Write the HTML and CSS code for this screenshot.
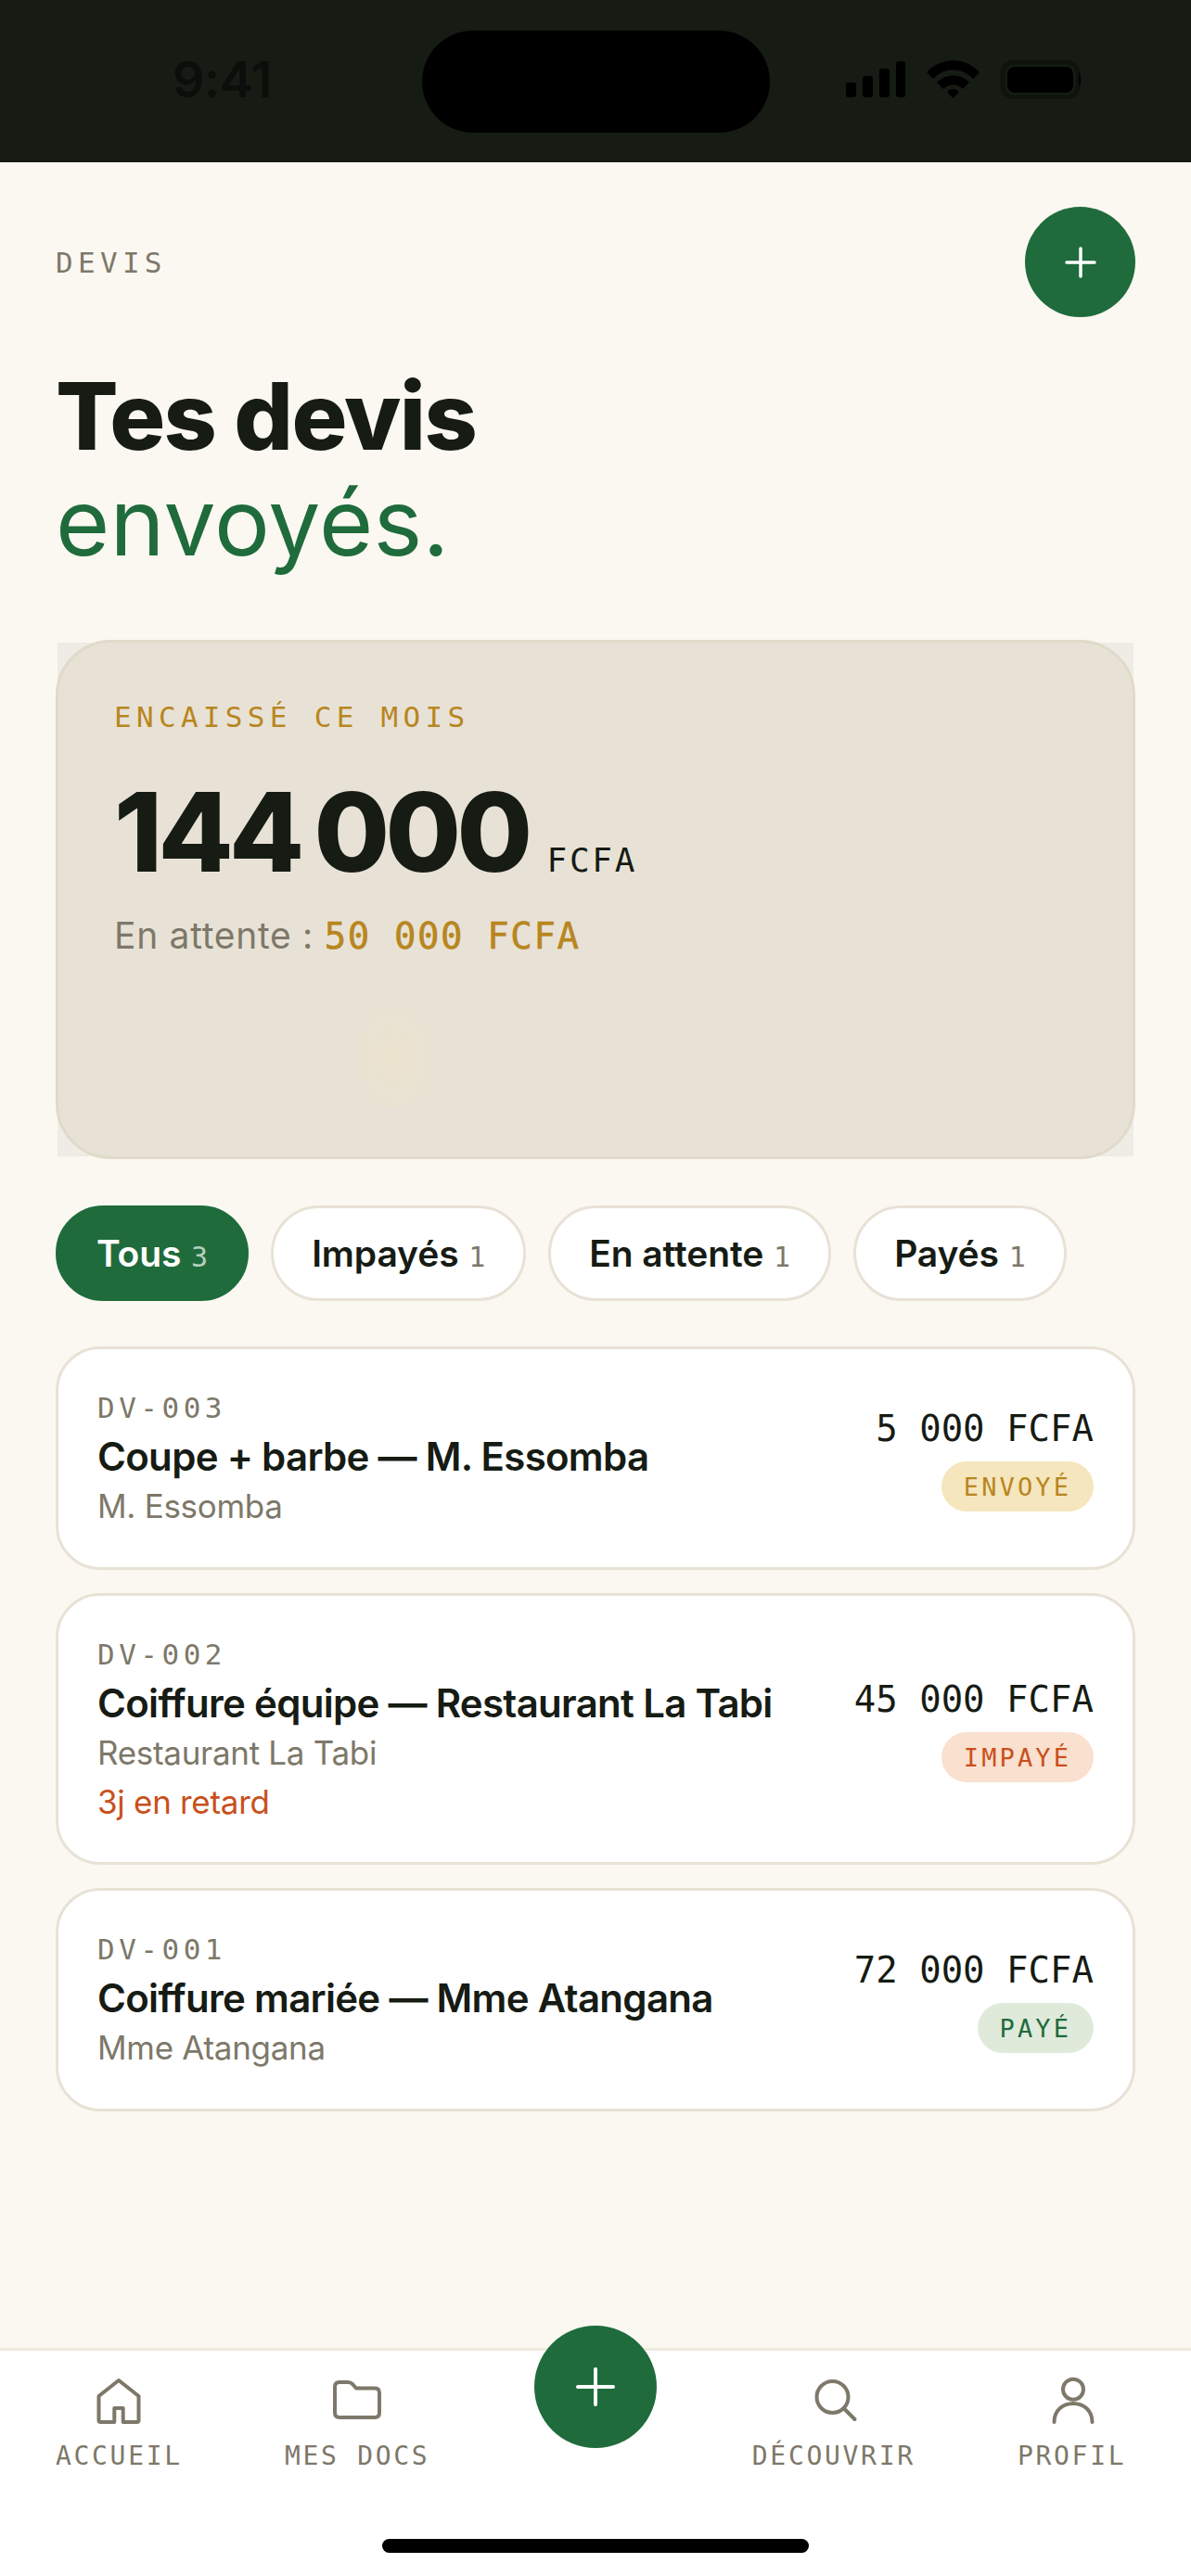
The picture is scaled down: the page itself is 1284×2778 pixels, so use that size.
FILE: index.html
```html
<!DOCTYPE html>
<html lang="fr">
<head>
    <meta charset="UTF-8">
    <meta name="viewport" content="width=device-width, initial-scale=1.0">
    <title>Devis</title>
    <link rel="stylesheet" href="styles.css">
</head>
<body>
    <div class="status-bar">
        <span class="status-time">9:41</span>
        <div class="island"></div>
        <svg class="status-icons" width="253" height="42" viewBox="0 0 253 42">
            <rect x="0" y="24" width="11" height="16" rx="3"/>
            <rect x="18" y="17" width="11" height="23" rx="3"/>
            <rect x="36" y="9" width="11" height="31" rx="3"/>
            <rect x="54" y="1" width="10" height="39" rx="3"/>
            <path d="M87 13 C102 -4 129 -4 144 13 L137 20 C125 7 106 7 94 20 Z"/>
            <path d="M98 24 C107 14 124 14 133 24 L126 31 C120 25 111 25 105 31 Z"/>
            <path d="M109 34 C113 30 118 30 122 34 L115.500 41 Z"/>
            <rect x="170" y="2" width="81" height="38" rx="12" fill="none" stroke="#0f130e" stroke-width="5" transform="translate(-1 0)"/>
            <rect x="174" y="7" width="71" height="28" rx="8"/>
            <path d="M251 13 C254 15 254 27 251 27 Z"/>
        </svg>
    </div>

    <main class="content">
        <header class="top-row">
            <span class="eyebrow">DEVIS</span>
            <button class="add-btn">
                <svg width="36" height="36" viewBox="0 0 36 36"><path d="M18 3V33M3 18H33" stroke="#fff" stroke-width="3.500" stroke-linecap="round"/></svg>
            </button>
        </header>

        <h1 class="page-title">Tes devis<br><em>envoyés.</em></h1>

        <section class="summary-back">
            <div class="summary">
                <div class="summary-label">ENCAISSÉ CE MOIS</div>
                <div class="summary-amount">144 000<span>FCFA</span></div>
                <div class="summary-pending">En attente : <b>50 000 FCFA</b></div>
                <div class="summary-glow"></div>
            </div>
        </section>

        <div class="chips">
            <div class="chip active">Tous <span>3</span></div>
            <div class="chip">Impayés <span>1</span></div>
            <div class="chip">En attente <span>1</span></div>
            <div class="chip">Payés <span>1</span></div>
        </div>

        <div class="quote-list">
            <div class="quote">
                <div class="quote-info">
                    <div class="quote-ref">DV-003</div>
                    <div class="quote-name">Coupe + barbe — M. Essomba</div>
                    <div class="quote-client">M. Essomba</div>
                </div>
                <div class="quote-side">
                    <div class="quote-price">5 000 FCFA</div>
                    <span class="badge sent">ENVOYÉ</span>
                </div>
            </div>
            <div class="quote">
                <div class="quote-info">
                    <div class="quote-ref">DV-002</div>
                    <div class="quote-name">Coiffure équipe — Restaurant La Tabi</div>
                    <div class="quote-client">Restaurant La Tabi</div>
                    <div class="quote-late">3j en retard</div>
                </div>
                <div class="quote-side">
                    <div class="quote-price">45 000 FCFA</div>
                    <span class="badge unpaid">IMPAYÉ</span>
                </div>
            </div>
            <div class="quote">
                <div class="quote-info">
                    <div class="quote-ref">DV-001</div>
                    <div class="quote-name">Coiffure mariée — Mme Atangana</div>
                    <div class="quote-client">Mme Atangana</div>
                </div>
                <div class="quote-side">
                    <div class="quote-price">72 000 FCFA</div>
                    <span class="badge paid">PAYÉ</span>
                </div>
            </div>
        </div>
    </main>

    <nav class="tab-bar">
        <div class="tab">
            <svg viewBox="0 0 54 54"><path d="M27 5 L48.500 22 V48 Q48.500 50 46.500 50 H31.700 V35 H22.300 V50 H7.500 Q5.500 50 5.500 48 V22 Z"/></svg>
            <span>ACCUEIL</span>
        </div>
        <div class="tab">
            <svg viewBox="0 0 54 54"><path d="M3 12 Q3 7 8 7 H17 Q20 7 22 9 L26 13.500 H46 Q51 13.500 51 18.500 V40 Q51 45 46 45 H8 Q3 45 3 40 Z"/></svg>
            <span>MES DOCS</span>
        </div>
        <div class="tab tab-center">
            <button class="tab-add">
                <svg width="42" height="42" viewBox="0 0 42 42"><path d="M21 2V40M2 21H40" stroke="#fff" stroke-width="4" stroke-linecap="round"/></svg>
            </button>
        </div>
        <div class="tab">
            <svg viewBox="0 0 54 54"><circle cx="25.500" cy="23" r="17"/><path d="M38 35.500 L49.500 47"/></svg>
            <span>DÉCOUVRIR</span>
        </div>
        <div class="tab">
            <svg viewBox="0 0 54 54"><circle cx="28" cy="14.700" r="11"/><path d="M7.500 50 C7.500 38 16 30 28 30 C40 30 48.500 38 48.500 50"/></svg>
            <span>PROFIL</span>
        </div>
        <div class="home-bar"></div>
    </nav>
</body>
</html>
```

FILE: styles.css
```css
:root {
    --ink: #161b14;
    --green: #1f6b3c;
    --gold: #b8861f;
    --muted: #7d7869;
    --line: #e8e2d6;
    --paper: #fbf8f1;
    --mono: "DejaVu Sans Mono", monospace;
    --sans: Inter, "Liberation Sans", sans-serif;
}

* {
    box-sizing: border-box;
}

body {
    margin: 0;
    width: 1284px;
    height: 2778px;
    display: flex;
    flex-direction: column;
    overflow: hidden;
    background-color: var(--paper);
    color: var(--ink);
    font-family: var(--sans);
}

button {
    border: none;
    padding: 0;
    display: flex;
    align-items: center;
    justify-content: center;
    background-color: var(--green);
    border-radius: 50%;
}

/* status bar */
.status-bar {
    height: 175px;
    flex-shrink: 0;
    display: flex;
    align-items: center;
    padding: 0 0 0 186px;
    background-color: var(--ink);
}
.status-time {
    width: 104px;
    margin-bottom: 4px;
    font-size: 54px;
    font-weight: 600;
    letter-spacing: -0.500px;
    color: #0b0e0a;
}
.island {
    width: 375px;
    height: 110px;
    margin-left: 165px;
    margin-right: 82px;
    border-radius: 55px;
    background-color: #000;
}
.status-icons {
    margin-bottom: 3px;
    fill: #000;
}

/* header */
.content {
    flex: 1;
    padding: 48px 60px 0;
}
.top-row {
    display: flex;
    align-items: center;
    justify-content: space-between;
}
.eyebrow {
    font-family: var(--mono);
    font-size: 31px;
    letter-spacing: 5.300px;
    color: var(--muted);
}
.add-btn {
    width: 119px;
    height: 119px;
}
.page-title {
    margin: 50px 0 73px;
    font-size: 100px;
    line-height: 114px;
    font-weight: 800;
    letter-spacing: -1.700px;
}
.page-title em {
    font-style: normal;
    font-weight: 400;
    letter-spacing: 0.300px;
    color: var(--green);
}

/* summary card */
.summary-back {
    margin: 0 2px;
    height: 554px;
    display: flex;
    background-color: #efece6;
}
.summary {
    position: relative;
    flex: 1;
    margin: -3px -2px;
    padding: 62px 60px 0;
    background-color: var(--line);
    border: 3px solid #e0dac9;
    border-radius: 60px;
}
.summary-label {
    font-family: var(--mono);
    font-size: 31px;
    letter-spacing: 5.300px;
    color: var(--gold);
}
.summary-amount {
    margin-top: 51px;
    font-size: 118px;
    line-height: 110px;
    font-weight: 800;
    letter-spacing: -4.700px;
    word-spacing: -6px;
}
.summary-amount span {
    margin-left: 20px;
    font-family: var(--mono);
    font-size: 36px;
    font-weight: 400;
    letter-spacing: 2.800px;
}
.summary-pending {
    margin-top: 2px;
    font-size: 39px;
    letter-spacing: 0.700px;
    color: var(--muted);
}
.summary-pending b {
    font-family: var(--mono);
    font-size: 39px;
    letter-spacing: 1.600px;
    font-weight: 400;
    -webkit-text-stroke: 0.6px var(--gold);
    color: var(--gold);
}
.summary-glow {
    position: absolute;
    left: 322px;
    top: 392px;
    width: 80px;
    height: 110px;
    background: radial-gradient(rgba(243, 228, 186, 0.3), rgba(243, 228, 186, 0));
}

/* filters */
.chips {
    display: flex;
    gap: 24px;
    margin-top: 53px;
}
.chip {
    height: 103px;
    padding: 0 41px;
    font-size: 39px;
    line-height: 97px;
    font-weight: 600;
    letter-spacing: -0.100px;
    background-color: #fff;
    border: 3px solid var(--line);
    border-radius: 52px;
}
.chip span {
    margin-left: 1px;
    font-family: var(--mono);
    font-size: 30px;
    font-weight: 400;
    letter-spacing: 0;
    color: var(--muted);
}
.chip.active {
    color: #fff;
    background-color: var(--green);
    border-color: var(--green);
}
.chip.active span {
    color: #b6cfbd;
}

/* quotes */
.quote-list {
    display: flex;
    flex-direction: column;
    gap: 25px;
    margin-top: 49px;
}
.quote {
    display: flex;
    justify-content: space-between;
    align-items: center;
    height: 241px;
    padding: 0 42px;
    background-color: #fff;
    border: 3px solid var(--line);
    border-radius: 48px;
}
.quote:nth-child(2) {
    height: 293px;
}
.quote-info {
    padding-top: 4px;
}
.quote-ref {
    font-family: var(--mono);
    font-size: 31px;
    line-height: 40px;
    letter-spacing: 4.500px;
    color: var(--muted);
}
.quote-name {
    margin-top: 5px;
    font-size: 42px;
    line-height: 55px;
    font-weight: 600;
    letter-spacing: -0.700px;
}
.quote-client,
.quote-late {
    font-size: 35px;
    line-height: 53px;
    letter-spacing: -0.300px;
    color: var(--muted);
}
.quote-late {
    color: #c9501c;
}
.quote-side {
    display: flex;
    flex-direction: column;
    align-items: flex-end;
    gap: 9px;
}
.quote-price {
    font-family: var(--mono);
    font-size: 39px;
    line-height: 52px;
    font-weight: 400;
}
.badge {
    height: 54px;
    padding: 0 24px;
    display: flex;
    align-items: center;
    font-family: var(--mono);
    font-size: 27px;
    letter-spacing: 3.100px;
    border-radius: 27px;
}
.badge.sent {
    color: var(--gold);
    background-color: #f5e6bd;
}
.badge.unpaid {
    color: #c9501c;
    background-color: #f9e0cf;
}
.badge.paid {
    color: var(--green);
    background-color: #dfeadb;
}

/* tab bar */
.tab-bar {
    position: relative;
    height: 246px;
    flex-shrink: 0;
    display: grid;
    grid-template-columns: repeat(5, 1fr);
    align-items: start;
    padding-top: 27px;
    background-color: #fff;
    border-top: 3px solid #efeade;
}
.tab {
    display: flex;
    flex-direction: column;
    align-items: center;
    gap: 16px;
    font-family: var(--mono);
    font-size: 28px;
    letter-spacing: 2.700px;
    color: var(--muted);
}
.tab svg {
    width: 54px;
    height: 54px;
    fill: none;
    stroke: var(--muted);
    stroke-width: 4;
    stroke-linecap: round;
    stroke-linejoin: round;
}
.tab-add {
    position: absolute;
    top: -27px;
    left: 576px;
    width: 132px;
    height: 132px;
}
.tab .tab-add svg {
    width: 42px;
    height: 42px;
}
.home-bar {
    position: absolute;
    left: 412px;
    bottom: 25px;
    width: 460px;
    height: 15px;
    border-radius: 8px;
    background-color: #000;
}
```
